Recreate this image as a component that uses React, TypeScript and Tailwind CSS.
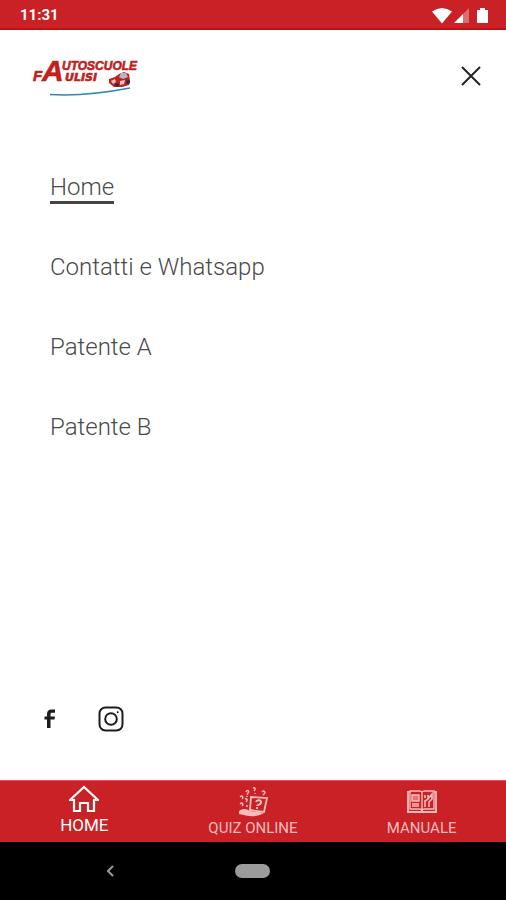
import React, { useState } from "react";

const menuItems = ["Home", "Contatti e Whatsapp", "Patente A", "Patente B"];

const StatusBar: React.FC = () => (
  <header className="flex h-[30px] items-center justify-between border-b-2 border-[#b81418] bg-[#c92125] pr-4 pl-5 text-white">
    <span className="pt-0.5 text-[15px] leading-5 font-bold">11:31</span>
    <svg width="58" height="18" viewBox="0 0 58 18" fill="currentColor" className="mt-1" aria-hidden="true">
      <path d="M0 4.5 Q10 -2.5 20 4.5 L10 16.5 Z" />
      <path d="M22 16 L31 7 V16 Z" />
      <path d="M31 7 L37 1 V16 H31 Z" opacity="0.35" />
      <path d="M48 1 H53 V3 H56 V16 H45 V3 H48 Z" />
    </svg>
  </header>
);

const Logo: React.FC = () => (
  <svg
    width="112"
    height="44"
    viewBox="0 0 112 44"
    fill="#c2201c"
    stroke="#c2201c"
    strokeWidth="0.6"
    className="font-['Liberation_Sans'] font-bold italic"
    role="img"
    aria-label="Autoscuole Faulisi"
  >
    <text x="1" y="27" fontSize="15">F</text>
    <text x="10" y="27" fontSize="30">A</text>
    <text x="30" y="16" fontSize="12">UTOSCUOLE</text>
    <text x="33" y="27" fontSize="11" className="font-['DejaVu_Sans']">ULISI</text>
    <path d="M18 40.5 C42 42 72 39 98 34" fill="none" stroke="#2f86b8" strokeWidth="1.6" />
    <path d="M77 25 L83 23 L87 20 L92 18 L97 20 L98 27 L97 31 L90 33 L82 33 L77 29 Z" stroke="none" />
    <path d="M87 23 L89 19 L94 19 L96 23 L91 25 Z" fill="#aeb9cb" stroke="none" />
    <path d="M79 27 L83 25 L84 28 L81 30 Z M88 27 L93 26 L92 30 L88 31 Z" fill="#e9c7cc" stroke="none" />
    <circle cx="85" cy="31" r="2" fill="#292c4c" stroke="none" />
    <circle cx="96" cy="28" r="2" fill="#292c4c" stroke="none" />
  </svg>
);

const HomeIcon: React.FC = () => (
  <svg width="30" height="28" viewBox="0 0 30 28" fill="none" stroke="currentColor" strokeWidth="2.2" aria-hidden="true">
    <path d="M1 15 L15 2 L29 15 H25 V26 H19 V18 H11 V26 H5 V15 Z" />
  </svg>
);

const QuizIcon: React.FC = () => (
  <svg width="30" height="30" viewBox="0 0 30 30" fill="none" stroke="currentColor" strokeWidth="1.4" aria-hidden="true">
    <path d="M13 10 L29 11 L26 25 L12 23 Z" strokeWidth="1.8" />
    <path d="M18 15 C19 12 24 13 23 16 C22 18 19 18 19 19" strokeWidth="2" />
    <path d="M18 21 H20" strokeWidth="2" />
    <path d="M1 24 C5 21 9 22 12 24 L21 25 L26 26 C18 31 9 29 1 27 Z" fill="currentColor" stroke="none" />
    <path d="M8 5 C9 2 12 4 10 6 L9 8 M15 1 C17 0 18 2 16 4 M24 5 C26 3 28 5 26 7 L25 8 M2 10 C4 8 6 10 4 12 M7 12 C9 11 10 13 8 15 M2 17 C4 15 6 17 4 19 M9 18 V20 M17 6 V7 M9 9 V10" />
  </svg>
);

const ManualIcon: React.FC = () => (
  <svg width="30" height="24" viewBox="0 0 30 24" fill="none" stroke="currentColor" strokeWidth="1.4" aria-hidden="true">
    <path d="M3 2 H1 V22 H29 V2 H27" strokeWidth="1.8" />
    <path d="M3 1 H12 Q15 1 15 3 Q15 1 18 1 H27 V19 H18 Q15 19 15 21 Q15 19 12 19 H3 Z M15 3 V21" />
    <path d="M5 5 H12 V11 H5 Z" fill="currentColor" fillOpacity="0.55" />
    <path d="M5 14 H12 M5 16 H12" />
    <path d="M18 17 V11 L21 9 V5 M21 9 L25 4 V9 L22 12 V17 M18 5 V8" strokeWidth="1.6" />
  </svg>
);

const tabs = [
  { label: "HOME", icon: HomeIcon },
  { label: "QUIZ ONLINE", icon: QuizIcon },
  { label: "MANUALE", icon: ManualIcon },
];

const App: React.FC = () => {
  const [active, setActive] = useState("Home");

  return (
    <div className="flex min-h-screen flex-col bg-white font-['Roboto',sans-serif]">
      <StatusBar />

      <main className="flex flex-1 flex-col">
        <div className="flex items-start justify-between pt-6 pr-6 pl-8">
          <Logo />
          <button type="button" aria-label="Chiudi menu" className="mt-3 text-[#222222]">
            <svg width="22" height="20" viewBox="0 0 22 20" fill="none" stroke="currentColor" strokeWidth="2" aria-hidden="true">
              <path d="M2 1 L20 19 M20 1 L2 19" />
            </svg>
          </button>
        </div>

        <nav className="mt-[74px] flex flex-col items-start gap-12 pl-[50px]">
          {menuItems.map((item) => (
            <a
              key={item}
              href="#"
              onClick={() => setActive(item)}
              className={`h-8 border-b-3 text-2xl leading-[30px] font-light text-[#4a4a4a] ${
                active === item ? "border-[#444444]" : "border-transparent"
              }`}
            >
              {item}
            </a>
          ))}
        </nav>

        <div className="mt-auto flex items-center gap-10 pb-12 pl-[42px] text-[#1c1c1c]">
          <a href="#" aria-label="Facebook">
            <svg width="16" height="20" viewBox="0 0 16 20" fill="currentColor" aria-hidden="true">
              <path d="M5 19 V10.5 H2.5 V7.5 H5 V5 C5 2 6.5 0.5 9.5 0.5 H13 V3.7 H10.5 C9 3.7 8.5 4.2 8.5 5.5 V7.5 H13 L12.5 10.5 H8.5 V19 Z" />
            </svg>
          </a>
          <a href="#" aria-label="Instagram">
            <svg width="26" height="26" viewBox="0 0 26 26" fill="none" stroke="currentColor" strokeWidth="2" aria-hidden="true">
              <rect x="1.5" y="1.5" width="23" height="23" rx="6" />
              <circle cx="13" cy="13" r="5.8" />
              <circle cx="19.7" cy="6.3" r="1" fill="currentColor" stroke="none" />
            </svg>
          </a>
        </div>
      </main>

      <nav className="grid h-[62px] grid-cols-3 border-t border-[#d9555a] bg-[#c92125]">
        {tabs.map(({ label, icon: Icon }, index) => (
          <a
            key={label}
            href="#"
            className={`flex flex-col items-center leading-5 ${
              index === 0 ? "pt-0.5 text-[17px] text-white" : "pt-[5px] text-[15px] text-[#f6bcbc]"
            }`}
          >
            <span className="flex h-8 items-center">
              <Icon />
            </span>
            {label}
          </a>
        ))}
      </nav>

      <footer className="grid h-[58px] grid-cols-3 items-center bg-black text-[#9b9b9b]">
        <button type="button" aria-label="Indietro" className="flex justify-end pr-[55px]">
          <svg width="8" height="12" viewBox="0 0 8 12" fill="none" stroke="currentColor" strokeWidth="2" aria-hidden="true">
            <path d="M7 1 L2 6 L7 11" />
          </svg>
        </button>
        <button type="button" aria-label="Schermata principale" className="h-[14px] w-[35px] justify-self-center rounded-full bg-[#9b9b9b]" />
      </footer>
    </div>
  );
};

export default App;
